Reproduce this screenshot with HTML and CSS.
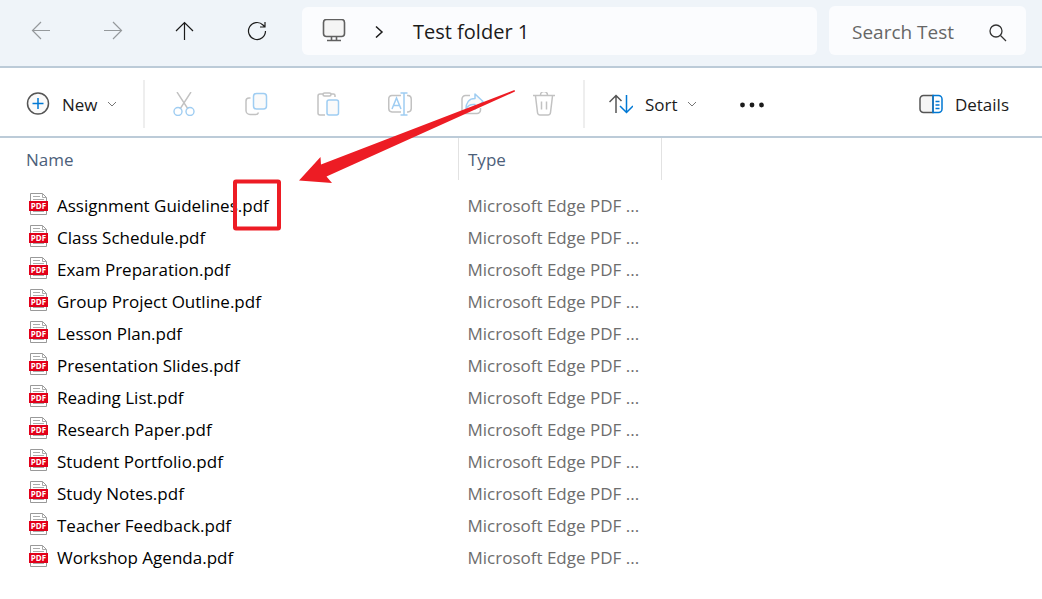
FILE: index.html
```html
<!DOCTYPE html>
<html lang="en">
<head>
    <meta charset="UTF-8">
    <meta name="viewport" content="width=device-width, initial-scale=1.0">
    <title>Test folder 1</title>
    <link rel="stylesheet" href="styles.css">
</head>
<body>
    <!-- Shared file icon -->
    <svg class="sprite" aria-hidden="true">
        <symbol id="pdf" viewBox="0 0 20 22">
            <path d="M1.500.5h12l4 4v17h-16z" fill="#fff" stroke="#999"/>
            <path d="M13.500.5v4h4M4 3.500h7M4 6.500h11M4 18.500h11" fill="none" stroke="#aaa"/>
            <path d="M0 8h19v10H0z" fill="#e2001a"/>
            <text x="9.500" y="16" class="pdf-label">PDF</text>
        </symbol>
    </svg>

    <header class="nav-bar">
        <nav class="nav-buttons">
            <button class="icon-button" aria-label="Back" disabled>
                <svg width="24" height="24" viewBox="0 0 24 24" stroke="#95999c" stroke-width="1.200"><path d="M21 11.500H3.500M12 3L3.500 11.500L12 20"/></svg>
            </button>
            <button class="icon-button" aria-label="Forward" disabled>
                <svg width="24" height="24" viewBox="0 0 24 24" stroke="#95999c" stroke-width="1.200"><path d="M3 11.500h17.500M12 3l8.500 8.500L12 20"/></svg>
            </button>
            <button class="icon-button" aria-label="Up">
                <svg width="24" height="24" viewBox="0 0 24 24" stroke="#1b1b1b" stroke-width="1.200"><path d="M11.500 21V3.500M3 12l8.500-8.500L20 12"/></svg>
            </button>
            <button class="icon-button" aria-label="Refresh">
                <svg width="24" height="24" viewBox="0 0 24 24" stroke="#1b1b1b" stroke-width="1.200"><path d="M20.500 12a8.500 8.500 0 1 1-2.500-6l2 2M20 3v5h-5"/></svg>
            </button>
        </nav>
        <div class="address">
            <svg width="24" height="24" viewBox="0 0 24 24" stroke="#606060" stroke-width="1.600"><rect x="1.500" y=".5" width="21" height="17" rx="3" fill="#f5f5f5"/><path d="M9.500 18v3M14.500 18v3M5 21.500h14"/></svg>
            <svg class="crumb-arrow" width="10" height="14" viewBox="0 0 10 14" stroke="#1b1b1b" stroke-width="1.500"><path d="M2 2.500L8 8L2 13.500"/></svg>
            <span>Test folder 1</span>
        </div>
        <form class="search">
            <input type="search" placeholder="Search Test" aria-label="Search Test folder">
            <svg width="18" height="18" viewBox="0 0 18 18" stroke="#333" stroke-width="1.300"><circle cx="7" cy="8" r="6"/><path d="M11.500 12.500L17 18"/></svg>
        </form>
    </header>

    <div class="toolbar">
        <button class="tool new">
            <svg width="24" height="24" viewBox="0 0 24 24"><circle cx="12" cy="11.500" r="10.500" fill="#fafafa" stroke="#555" stroke-width="1.500"/><path d="M12 6v11M6.500 11.500h11" stroke="#0078d4" stroke-width="1.500"/></svg>
            <span>New</span>
            <svg class="chevron" width="10" height="6" viewBox="0 0 10 6" stroke="#777"><path d="M1 1l4 4l4-4"/></svg>
        </button>
        <div class="tool-group">
            <button class="icon-button" aria-label="Cut" disabled>
                <svg width="24" height="24" viewBox="0 0 24 24" stroke="#c2c2c2" stroke-width="1.400"><path d="M5 0l11 17M19 0L8 17"/><g stroke="#9fcdf2"><circle cx="6" cy="19.500" r="4"/><circle cx="18" cy="19.500" r="4"/></g></svg>
            </button>
            <button class="icon-button" aria-label="Copy" disabled>
                <svg width="24" height="24" viewBox="0 0 24 24" stroke="#c2c2c2" stroke-width="1.500"><path d="M6.500 6H5a3 3 0 0 0-3 3v9.500a4 4 0 0 0 4 4h5.500a3 3 0 0 0 3-2"/><rect x="9.500" y="1.500" width="13" height="15.500" rx="3" fill="#fafafa" stroke="#9fcdf2"/></svg>
            </button>
            <button class="icon-button" aria-label="Paste" disabled>
                <svg width="24" height="24" viewBox="0 0 24 24" stroke="#c2c2c2" stroke-width="1.500"><path d="M7 2H4Q2 2 2 4v17q0 2 2 2h5M15 2h2.500q1.500 0 1.500 1.500V5"/><rect x="7" y="1" width="8" height="3" rx="1.500"/><rect x="11" y="8" width="11.500" height="15" rx="2" fill="#fafafa" stroke="#9fcdf2"/></svg>
            </button>
            <button class="icon-button" aria-label="Rename" disabled>
                <svg width="24" height="24" viewBox="0 0 24 24" stroke="#c2c2c2" stroke-width="1.500"><path d="M13 3.500H4A3.500 3.500 0 0 0 .75 7v9.500A3.500 3.500 0 0 0 4 20h9M19 3.500h1A3.500 3.500 0 0 1 23.250 7v9.500A3.500 3.500 0 0 1 20 20h-1"/><path d="M4 17L8.500 6L13 17M5.500 13.500h6M16 1v22M12.500 1h7M12.500 23h7" stroke="#9fcdf2"/></svg>
            </button>
            <button class="icon-button" aria-label="Share" disabled>
                <svg width="24" height="24" viewBox="0 0 24 24" stroke="#c2c2c2" stroke-width="1.500"><path d="M10 3.500H5.500A3.500 3.500 0 0 0 2 7v11a3.500 3.500 0 0 0 3.500 3.500H17a3.500 3.500 0 0 0 3.500-3.500v-2"/><path d="M15 2l8 7.500L15 17v-4.500C11 12 8 13 6 17C6 11 9 6.500 15 6.500z" fill="#fafafa" stroke="#9fcdf2" stroke-linejoin="round"/></svg>
            </button>
            <button class="icon-button" aria-label="Delete" disabled>
                <svg width="24" height="24" viewBox="0 0 24 24" stroke="#c2c2c2" stroke-width="1.500"><path d="M1 3.500h22M3.500 4l2 16.500q.3 2.500 2.500 2.500h8q2.200 0 2.500-2.500l2-16.500M8.500 3a3.500 3.500 0 0 1 7 0M9.500 9.500v8M14.500 9.500v8"/></svg>
            </button>
        </div>
        <button class="tool sort">
            <svg width="24" height="24" viewBox="0 0 24 24" stroke-width="1.500"><path d="M7 21V3.500M.5 10L7 3.500L12.500 9" stroke="#555"/><path d="M17.500 3v17.500M11 14l6.500 6.500L24 14" stroke="#0078d4"/></svg>
            <span>Sort</span>
            <svg class="chevron" width="10" height="6" viewBox="0 0 10 6" stroke="#777"><path d="M1 1l4 4l4-4"/></svg>
        </button>
        <button class="icon-button more" aria-label="See more">
            <svg width="24" height="24" viewBox="0 0 24 24"><g fill="#1b1b1b"><circle cx="2.500" cy="13" r="2.400"/><circle cx="12" cy="13" r="2.400"/><circle cx="21.500" cy="13" r="2.400"/></g></svg>
        </button>
        <button class="tool details">
            <svg width="24" height="24" viewBox="0 0 24 24" stroke-width="1.500"><path d="M14 3.500H4.500A3.500 3.500 0 0 0 1 7v10a3.500 3.500 0 0 0 3.500 3.500H14z" fill="#f5f5f5" stroke="#555"/><path d="M14 3.500h5.500A3.500 3.500 0 0 1 23 7v10a3.500 3.500 0 0 1-3.500 3.500H14zM16.500 9.500h4M16.500 13h4M16.500 16.500h4" stroke="#0078d4"/></svg>
            <span>Details</span>
        </button>
    </div>

    <main>
        <table class="files">
            <thead>
                <tr><th class="col-name">Name</th><th class="col-type">Type</th></tr>
            </thead>
            <tbody>
                <tr><td><div class="file"><svg width="20" height="22"><use href="#pdf"/></svg>Assignment Guidelines.pdf</div></td><td>Microsoft Edge PDF ...</td></tr>
                <tr><td><div class="file"><svg width="20" height="22"><use href="#pdf"/></svg>Class Schedule.pdf</div></td><td>Microsoft Edge PDF ...</td></tr>
                <tr><td><div class="file"><svg width="20" height="22"><use href="#pdf"/></svg>Exam Preparation.pdf</div></td><td>Microsoft Edge PDF ...</td></tr>
                <tr><td><div class="file"><svg width="20" height="22"><use href="#pdf"/></svg>Group Project Outline.pdf</div></td><td>Microsoft Edge PDF ...</td></tr>
                <tr><td><div class="file"><svg width="20" height="22"><use href="#pdf"/></svg>Lesson Plan.pdf</div></td><td>Microsoft Edge PDF ...</td></tr>
                <tr><td><div class="file"><svg width="20" height="22"><use href="#pdf"/></svg>Presentation Slides.pdf</div></td><td>Microsoft Edge PDF ...</td></tr>
                <tr><td><div class="file"><svg width="20" height="22"><use href="#pdf"/></svg>Reading List.pdf</div></td><td>Microsoft Edge PDF ...</td></tr>
                <tr><td><div class="file"><svg width="20" height="22"><use href="#pdf"/></svg>Research Paper.pdf</div></td><td>Microsoft Edge PDF ...</td></tr>
                <tr><td><div class="file"><svg width="20" height="22"><use href="#pdf"/></svg>Student Portfolio.pdf</div></td><td>Microsoft Edge PDF ...</td></tr>
                <tr><td><div class="file"><svg width="20" height="22"><use href="#pdf"/></svg>Study Notes.pdf</div></td><td>Microsoft Edge PDF ...</td></tr>
                <tr><td><div class="file"><svg width="20" height="22"><use href="#pdf"/></svg>Teacher Feedback.pdf</div></td><td>Microsoft Edge PDF ...</td></tr>
                <tr><td><div class="file"><svg width="20" height="22"><use href="#pdf"/></svg>Workshop Agenda.pdf</div></td><td>Microsoft Edge PDF ...</td></tr>
            </tbody>
        </table>
    </main>

    <!-- Arrow and box pointing at the file extension -->
    <svg class="annotation" width="290" height="150" viewBox="230 85 290 150" aria-hidden="true">
        <path d="M514.500 90L321 164.500L320.500 157L299 180.500L332 183L326.500 176.500L515 91.500z" fill="#ed1c24"/>
        <rect x="235" y="181.500" width="44" height="47" rx="1" stroke="#ed1c24" stroke-width="4"/>
    </svg>
</body>
</html>
```
FILE: styles.css
```css
body {
    margin: 0;
    position: relative;
    background: #fff;
    font-family: 'Open Sans', 'Noto Sans', sans-serif;
    font-size: 17px;
    color: #1b1b1b;
}

button {
    border: 0;
    padding: 0;
    background: none;
    font: inherit;
    color: inherit;
}

svg {
    fill: none;
    flex-shrink: 0;
}

.sprite {
    display: none;
}

/* Navigation */
.nav-bar {
    display: flex;
    align-items: flex-end;
    padding: 6px 16px 11px 5px;
    background: #eff4f9;
    border-bottom: 2px solid #bccbd8;
}

.nav-buttons,
.tool-group {
    display: flex;
}

.icon-button {
    display: flex;
    align-items: center;
    justify-content: center;
    width: 72px;
    height: 48px;
}

.address {
    flex: 1;
    display: flex;
    align-items: center;
    height: 48px;
    margin: 0 12px 0 9px;
    padding-left: 20px;
    box-sizing: border-box;
    background: #fbfcfe;
    border-radius: 6px;
    font-size: 20px;
}

.crumb-arrow {
    margin: 0 29px 0 28px;
}

.search {
    display: flex;
    align-items: center;
    width: 197px;
    height: 49px;
    padding: 2px 19px 0 23px;
    box-sizing: border-box;
    background: #fbfcfe;
    border-radius: 6px;
}

.search svg {
    overflow: visible;
}

.search input {
    flex: 1;
    min-width: 0;
    border: 0;
    padding: 0;
    background: none;
    outline: none;
    font: inherit;
    font-size: 19px;
}

.search input::placeholder {
    color: #666;
}

/* Commands */
.toolbar {
    display: flex;
    align-items: center;
    padding: 12px 33px 8px 26px;
    border-bottom: 2px solid #bccbd8;
}

.tool {
    display: flex;
    align-items: center;
    gap: 12px;
    height: 48px;
}

.chevron {
    margin-left: -3px;
}

.new {
    width: 119px;
    border-right: 2px solid #eee;
    box-sizing: border-box;
}

.tool-group {
    padding: 0 3px;
    border-right: 2px solid #eee;
}

.sort {
    margin-left: 24px;
}

.more {
    margin-left: 19px;
}

.details {
    margin-left: auto;
}

/* File list */
.files {
    border-collapse: collapse;
    table-layout: fixed;
    width: 662px;
}

.files th {
    height: 42px;
    padding: 0 0 0 9px;
    border-right: 1px solid #e2e2e2;
    font-weight: normal;
    text-align: left;
    color: #4c607a;
}

.files .col-name {
    width: 432px;
    padding-left: 26px;
}

.files tbody::before {
    content: "";
    display: block;
    height: 9px;
}

.files td {
    height: 32px;
    padding: 0 0 0 9px;
    color: #6d6d6d;
}

.file {
    display: flex;
    align-items: center;
    gap: 8px;
    padding-left: 20px;
    color: #000;
}

.file svg {
    margin-bottom: 3px;
}

.pdf-label {
    fill: #fff;
    font-size: 8px;
    font-weight: bold;
    text-anchor: middle;
}

.annotation {
    position: absolute;
    top: 85px;
    left: 230px;
    pointer-events: none;
}
```
